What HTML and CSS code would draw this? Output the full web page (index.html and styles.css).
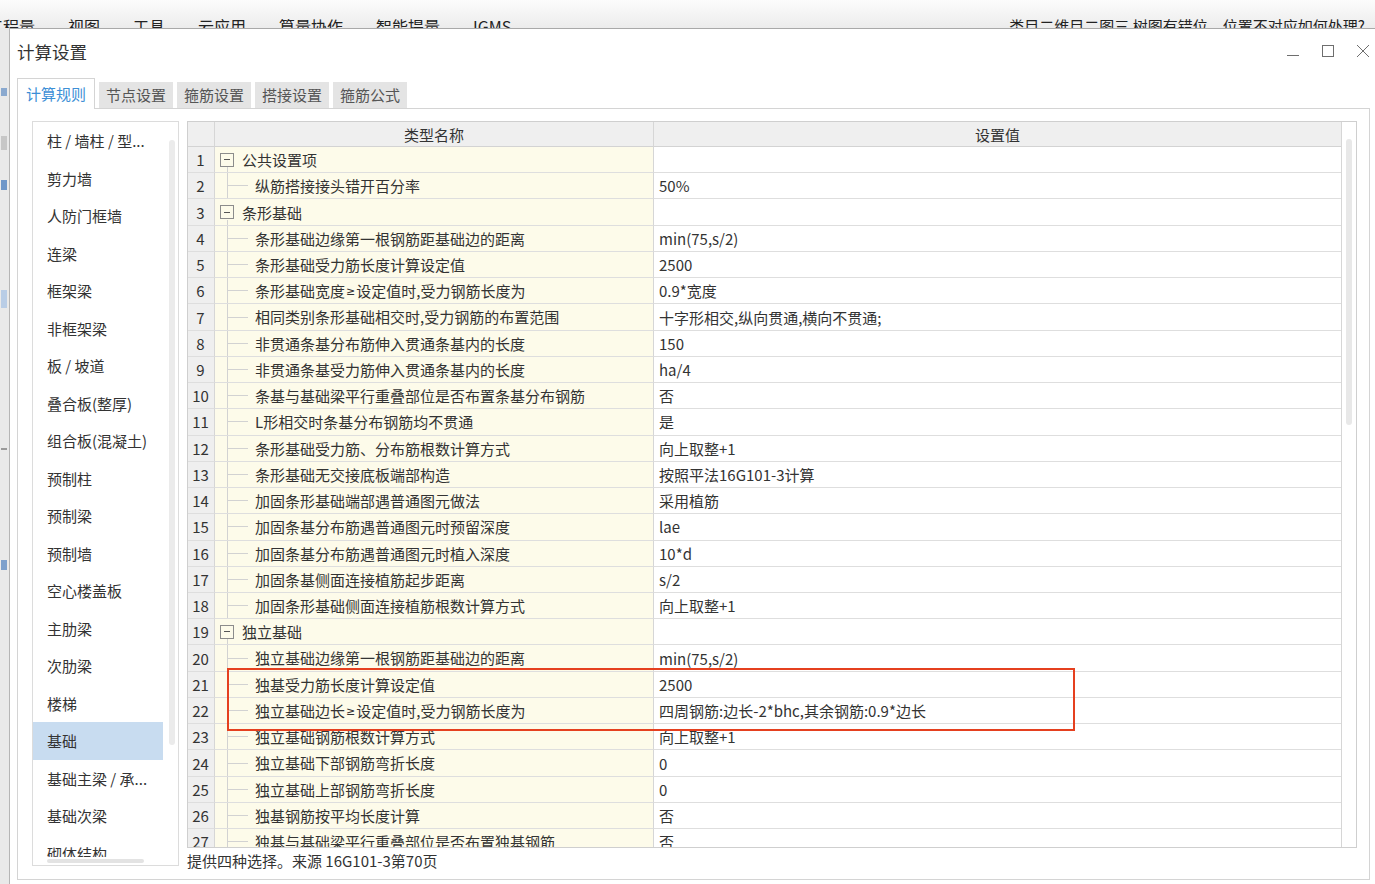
FILE: index.html
```html
<!DOCTYPE html>
<html lang="zh">
<head>
<meta charset="utf-8">
<title>计算设置</title>
<link rel="stylesheet" href="styles.css">
</head>
<body>
<div class="screen">
  <div class="appbar">
    <span class="menu first">工程量</span>
    <span class="menu">视图</span>
    <span class="menu">工具</span>
    <span class="menu">云应用</span>
    <span class="menu">算量协作</span>
    <span class="menu">智能提量</span>
    <span class="menu">IGMS</span>
    <span class="menu-note">类目二维目二图三 树图有错位，位置不对应如何处理?</span>
  </div>
  <div class="stage">
    <div class="app-edge">
      <span class="mark m1"></span>
      <span class="mark m2"></span>
      <span class="mark m3"></span>
      <span class="mark m4"></span>
      <span class="mark m5"></span>
      <span class="mark m6"></span>
    </div>
    <div class="dialog">
      <div class="titlebar">
        <span class="title">计算设置</span>
        <div class="controls">
          <svg width="14" height="14" viewBox="0 0 14 14"><line x1="1" y1="11.5" x2="13" y2="11.5" stroke="#6e6e6e" stroke-width="1"/></svg>
          <svg width="14" height="14" viewBox="0 0 14 14"><rect x="1.5" y="1.5" width="11" height="11" fill="none" stroke="#6e6e6e" stroke-width="1"/></svg>
          <svg width="14" height="14" viewBox="0 0 14 14"><path d="M1 1 L13 13 M13 1 L1 13" stroke="#6e6e6e" stroke-width="1" fill="none"/></svg>
        </div>
      </div>
      <div class="tabs">
        <span class="tab active">计算规则</span>
        <span class="tab">节点设置</span>
        <span class="tab">箍筋设置</span>
        <span class="tab">搭接设置</span>
        <span class="tab">箍筋公式</span>
      </div>
      <div class="panel">
        <div class="sidebar">
          <div class="side-items">
            <div class="side-item">柱 / 墙柱 / 型...</div>
            <div class="side-item">剪力墙</div>
            <div class="side-item">人防门框墙</div>
            <div class="side-item">连梁</div>
            <div class="side-item">框架梁</div>
            <div class="side-item">非框架梁</div>
            <div class="side-item">板 / 坡道</div>
            <div class="side-item">叠合板(整厚)</div>
            <div class="side-item">组合板(混凝土)</div>
            <div class="side-item">预制柱</div>
            <div class="side-item">预制梁</div>
            <div class="side-item">预制墙</div>
            <div class="side-item">空心楼盖板</div>
            <div class="side-item">主肋梁</div>
            <div class="side-item">次肋梁</div>
            <div class="side-item">楼梯</div>
            <div class="side-item selected">基础</div>
            <div class="side-item">基础主梁 / 承...</div>
            <div class="side-item">基础次梁</div>
            <div class="side-item">砌体结构</div>
          </div>
          <div class="side-vtrack"><div class="side-vthumb"></div></div>
          <div class="side-htrack"><div class="side-hthumb"></div></div>
        </div>
        <div class="main">
          <div class="grid">
            <div class="grid-main">
              <div class="row head"><div class="c num"></div><div class="c name">类型名称</div><div class="c val">设置值</div></div>
              <div class="row group"><div class="c num">1</div><div class="c name"><span class="box"></span>公共设置项</div><div class="c val"></div></div>
              <div class="row"><div class="c num">2</div><div class="c name"><span class="twig"></span>纵筋搭接接头错开百分率</div><div class="c val">50%</div></div>
              <div class="row group"><div class="c num">3</div><div class="c name"><span class="box"></span>条形基础</div><div class="c val"></div></div>
              <div class="row"><div class="c num">4</div><div class="c name"><span class="twig"></span>条形基础边缘第一根钢筋距基础边的距离</div><div class="c val">min(75,s/2)</div></div>
              <div class="row"><div class="c num">5</div><div class="c name"><span class="twig"></span>条形基础受力筋长度计算设定值</div><div class="c val">2500</div></div>
              <div class="row"><div class="c num">6</div><div class="c name"><span class="twig"></span>条形基础宽度<span class="ge">≥</span>设定值时,受力钢筋长度为</div><div class="c val">0.9*宽度</div></div>
              <div class="row"><div class="c num">7</div><div class="c name"><span class="twig"></span>相同类别条形基础相交时,受力钢筋的布置范围</div><div class="c val">十字形相交,纵向贯通,横向不贯通;</div></div>
              <div class="row"><div class="c num">8</div><div class="c name"><span class="twig"></span>非贯通条基分布筋伸入贯通条基内的长度</div><div class="c val">150</div></div>
              <div class="row"><div class="c num">9</div><div class="c name"><span class="twig"></span>非贯通条基受力筋伸入贯通条基内的长度</div><div class="c val">ha/4</div></div>
              <div class="row"><div class="c num">10</div><div class="c name"><span class="twig"></span>条基与基础梁平行重叠部位是否布置条基分布钢筋</div><div class="c val">否</div></div>
              <div class="row"><div class="c num">11</div><div class="c name"><span class="twig"></span>L形相交时条基分布钢筋均不贯通</div><div class="c val">是</div></div>
              <div class="row"><div class="c num">12</div><div class="c name"><span class="twig"></span>条形基础受力筋、分布筋根数计算方式</div><div class="c val">向上取整+1</div></div>
              <div class="row"><div class="c num">13</div><div class="c name"><span class="twig"></span>条形基础无交接底板端部构造</div><div class="c val">按照平法16G101-3计算</div></div>
              <div class="row"><div class="c num">14</div><div class="c name"><span class="twig"></span>加固条形基础端部遇普通图元做法</div><div class="c val">采用植筋</div></div>
              <div class="row"><div class="c num">15</div><div class="c name"><span class="twig"></span>加固条基分布筋遇普通图元时预留深度</div><div class="c val">lae</div></div>
              <div class="row"><div class="c num">16</div><div class="c name"><span class="twig"></span>加固条基分布筋遇普通图元时植入深度</div><div class="c val">10*d</div></div>
              <div class="row"><div class="c num">17</div><div class="c name"><span class="twig"></span>加固条基侧面连接植筋起步距离</div><div class="c val">s/2</div></div>
              <div class="row"><div class="c num">18</div><div class="c name"><span class="twig"></span>加固条形基础侧面连接植筋根数计算方式</div><div class="c val">向上取整+1</div></div>
              <div class="row group"><div class="c num">19</div><div class="c name"><span class="box"></span>独立基础</div><div class="c val"></div></div>
              <div class="row"><div class="c num">20</div><div class="c name"><span class="twig"></span>独立基础边缘第一根钢筋距基础边的距离</div><div class="c val">min(75,s/2)</div></div>
              <div class="row"><div class="c num">21</div><div class="c name"><span class="twig"></span>独基受力筋长度计算设定值</div><div class="c val">2500</div></div>
              <div class="row"><div class="c num">22</div><div class="c name"><span class="twig"></span>独立基础边长<span class="ge">≥</span>设定值时,受力钢筋长度为</div><div class="c val">四周钢筋:边长-2*bhc,其余钢筋:0.9*边长</div></div>
              <div class="row"><div class="c num">23</div><div class="c name"><span class="twig"></span>独立基础钢筋根数计算方式</div><div class="c val">向上取整+1</div></div>
              <div class="row"><div class="c num">24</div><div class="c name"><span class="twig"></span>独立基础下部钢筋弯折长度</div><div class="c val">0</div></div>
              <div class="row"><div class="c num">25</div><div class="c name"><span class="twig"></span>独立基础上部钢筋弯折长度</div><div class="c val">0</div></div>
              <div class="row"><div class="c num">26</div><div class="c name"><span class="twig"></span>独基钢筋按平均长度计算</div><div class="c val">否</div></div>
              <div class="row"><div class="c num">27</div><div class="c name"><span class="twig"></span>独基与基础梁平行重叠部位是否布置独基钢筋</div><div class="c val">否</div></div>
              <div class="highlight"></div>
            </div>
            <div class="vscroll"><div class="vthumb"></div></div>
          </div>
          <div class="status">提供四种选择。来源 16G101-3第70页</div>
        </div>
      </div>
    </div>
  </div>
</div>
</body>
</html>
```

FILE: styles.css
```css
* { box-sizing: border-box; }

html, body {
  margin: 0;
  padding: 0;
  background: #ffffff;
}

body {
  font-family: "Noto Sans CJK SC", "Noto Sans", "Liberation Sans", sans-serif;
  color: #333333;
}

.screen {
  width: 1375px;
  height: 884px;
  overflow: hidden;
  display: flex;
  flex-direction: column;
}

/* background application strip */
.appbar {
  height: 28px;
  flex: none;
  overflow: hidden;
  display: flex;
  align-items: flex-start;
  white-space: nowrap;
  padding-top: 16px;
  background: linear-gradient(#fcfcfc, #ececec);
  font-size: 16px;
  line-height: 20px;
  color: #222222;
}

.menu {
  flex: none;
  margin-right: 33px;
}

.menu.first {
  margin-left: -13px;
}

.menu-note {
  flex: none;
  margin-left: 465px;
  font-size: 15px;
}

.stage {
  flex: 1;
  display: flex;
  min-height: 0;
}

.app-edge {
  width: 10px;
  flex: none;
  background: #e9e9e9;
  border-right: 1px solid #b5b5b5;
  display: flex;
  flex-direction: column;
}

.mark {
  display: block;
  width: 6px;
  margin-left: 1px;
}

.m1 { height: 8px; margin-top: 60px; background: #8aa9cf; }
.m2 { height: 14px; margin-top: 40px; background: #c7c7c7; }
.m3 { height: 10px; margin-top: 30px; background: #6f97c9; }
.m4 { height: 18px; margin-top: 100px; background: #b9cde6; }
.m5 { height: 2px; margin-top: 140px; background: #9a9a9a; }
.m6 { height: 10px; margin-top: 110px; background: #7da0cc; }

/* dialog */
.dialog {
  flex: 1;
  display: flex;
  flex-direction: column;
  background: #ffffff;
  border-top: 1px solid #a9a9a9;
  min-width: 0;
}

.titlebar {
  height: 49px;
  flex: none;
  display: flex;
  align-items: center;
  justify-content: space-between;
  padding-left: 7px;
  padding-right: 5px;
}

.title {
  font-size: 17.5px;
  color: #333333;
  line-height: 24px;
  margin-top: -3px;
}

.controls {
  display: flex;
  gap: 21px;
  align-items: center;
  margin-top: -5px;
}

.controls svg {
  display: block;
}

.tabs {
  height: 30px;
  flex: none;
  display: flex;
  align-items: flex-end;
  padding-left: 7px;
  gap: 4px;
}

.tab {
  width: 74px;
  height: 26px;
  background: #e4e4e4;
  font-size: 15px;
  line-height: 26px;
  text-align: center;
  color: #555555;
}

.tab.active {
  width: 78px;
  height: 31px;
  background: #ffffff;
  border: 1px solid #d4d4d4;
  border-bottom: none;
  color: #3d8fd6;
  line-height: 30px;
  margin-bottom: -1px;
  position: relative;
  z-index: 1;
}

.panel {
  height: 772px;
  flex: none;
  margin-left: 7px;
  margin-right: 5px;
  border: 1px solid #d4d4d4;
  padding: 12px 12px 0 14px;
  display: flex;
  align-items: flex-start;
}

/* sidebar list */
.sidebar {
  width: 147px;
  height: 745px;
  flex: none;
  border: 1px solid #dcdcdc;
  display: grid;
  grid-template-columns: 130px 1fr;
  grid-template-rows: 735px 1fr;
}

.side-items {
  overflow: hidden;
}

.side-item {
  height: 37.5px;
  line-height: 37.5px;
  padding-left: 14px;
  font-size: 15px;
  color: #333333;
  white-space: nowrap;
}

.side-item.selected {
  background: #c8dcf0;
}

.side-vtrack {
  padding: 18px 0 0 6px;
}

.side-vthumb {
  width: 6px;
  height: 605px;
  border-radius: 3px;
  background: #ebebeb;
}

.side-htrack {
  grid-column: 1 / 3;
  padding: 2px 0 0 14px;
}

.side-hthumb {
  width: 97px;
  height: 4px;
  border-radius: 2px;
  background: #e3e3e3;
}

/* right main */
.main {
  flex: 1;
  margin-left: 8px;
  display: flex;
  flex-direction: column;
  min-width: 0;
}

.grid {
  height: 727px;
  border: 1px solid #cfcfcf;
  display: flex;
}

.grid-main {
  flex: 1;
  overflow: hidden;
  position: relative;
  min-width: 0;
}

.vscroll {
  width: 15px;
  flex: none;
  border-left: 1px solid #d6d6d6;
  padding: 17px 0 0 4px;
}

.vthumb {
  width: 6px;
  height: 286px;
  border-radius: 3px;
  background: #e8e8e8;
}

.row {
  display: grid;
  grid-template-columns: 27px 439px 1fr;
  height: 26.24px;
  font-size: 15px;
  color: #333333;
}

.c {
  display: flex;
  align-items: center;
  border-bottom: 1px solid #dedede;
  white-space: nowrap;
  overflow: hidden;
}

.c.num {
  justify-content: center;
  background: #efefef;
  border-right: 1px solid #d6d6d6;
  padding-right: 1px;
}

.c.name {
  background: #fdfbea;
  border-right: 1px solid #d6d6d6;
  padding-left: 12px;
  align-items: stretch;
  line-height: 25px;
}

.c.val {
  padding-left: 5px;
  background: #ffffff;
}

.ge {
  font-family: "Noto Sans", "DejaVu Sans", sans-serif;
  font-size: 11px;
  margin: 0 1px;
}

.row.head {
  height: 25px;
}

.row.head .c {
  background: #efefef;
  justify-content: center;
  padding: 0;
  border-bottom: 1px solid #d3d3d3;
}

.group .c.name {
  padding-left: 5px;
  align-items: center;
  background-image: linear-gradient(#d2d2d2, #d2d2d2);
  background-size: 1px 5px;
  background-position: 12px 100%;
  background-repeat: no-repeat;
}

.box {
  width: 14px;
  height: 14px;
  flex: none;
  border: 1px solid #8c8c8c;
  background: linear-gradient(#555555, #555555) center / 6px 1px no-repeat, #fdfbea;
  margin-right: 8px;
}

.twig {
  width: 28px;
  flex: none;
  background:
    linear-gradient(#d2d2d2, #d2d2d2) 0 0 / 1px 100% no-repeat,
    linear-gradient(#d2d2d2, #d2d2d2) 0 50% / 21px 1px no-repeat;
}

.highlight {
  position: absolute;
  left: 39px;
  top: 546px;
  width: 848px;
  height: 63px;
  border: 2px solid #e5401f;
  pointer-events: none;
}

.status {
  height: 32px;
  font-size: 15px;
  line-height: 26px;
  color: #333333;
  white-space: nowrap;
}
```
